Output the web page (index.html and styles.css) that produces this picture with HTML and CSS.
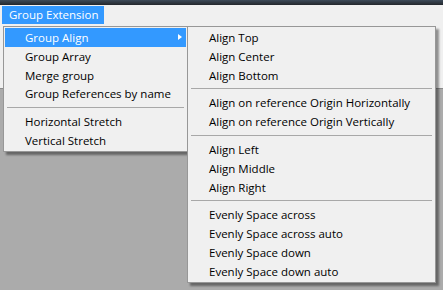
FILE: index.html
```html
<!DOCTYPE html>
<html lang="en">
<head>
  <meta charset="UTF-8">
  <title>Group Extension</title>
  <link rel="stylesheet" href="styles.css">
</head>
<body>
  <div class="titlebar"></div>
  <div class="menubar">
    <span class="menubar-item active">Group Extension</span>
  </div>
  <div class="workspace">
    <div class="toolstrip"></div>

    <div class="menu main-menu">
      <div class="item active">Group Align<span class="arrow"></span></div>
      <div class="item">Group Array</div>
      <div class="item">Merge group</div>
      <div class="item">Group References by name</div>
      <div class="sep"></div>
      <div class="item">Horizontal Stretch</div>
      <div class="item">Vertical Stretch</div>
    </div>

    <div class="menu sub-menu">
      <div class="item">Align Top</div>
      <div class="item">Align Center</div>
      <div class="item">Align Bottom</div>
      <div class="sep"></div>
      <div class="item">Align on reference Origin Horizontally</div>
      <div class="item">Align on reference Origin Vertically</div>
      <div class="sep"></div>
      <div class="item">Align Left</div>
      <div class="item">Align Middle</div>
      <div class="item">Align Right</div>
      <div class="sep"></div>
      <div class="item">Evenly Space across</div>
      <div class="item">Evenly Space across auto</div>
      <div class="item">Evenly Space down</div>
      <div class="item">Evenly Space down auto</div>
    </div>
  </div>
</body>
</html>
```

FILE: styles.css
```css
html, body {
  margin: 0;
  height: 100%;
}
body {
  font-family: "Open Sans", "Noto Sans", sans-serif;
  font-size: 11.5px;
  color: #000;
  background-color: #ababab;
  overflow: hidden;
}
.titlebar {
  height: 5px;
  background: linear-gradient(#3d4b59, #23272c);
}
.menubar {
  height: 20px;
  background-color: #f0f0f0;
  padding-left: 2px;
  display: flex;
  align-items: center;
}
.menubar-item {
  height: 18px;
  line-height: 18px;
  padding: 0 6px 0 7px;
}
.menubar-item.active {
  background-color: #3399ff;
  color: white;
}
.workspace {
  position: relative;
  height: 265px;
}
.toolstrip {
  height: 63px;
  background-color: #f0f0f0;
  border-bottom: 1px solid #8c8c8c;
}
.menu {
  position: absolute;
  top: 1px;
  background-color: #f0f0f0;
  border: 1px solid #979797;
  padding: 1px 1px;
  box-shadow: 3px 3px 2px rgba(0,0,0,0.4);
}
.main-menu {
  left: 3px;
  width: 181px;
}
.sub-menu {
  left: 187px;
  width: 245px;
}
.item {
  position: relative;
  height: 18.8px;
  line-height: 19.8px;
  padding-left: 20px;
  white-space: nowrap;
}
.item.active {
  background-color: #3399ff;
  color: white;
}
.arrow {
  position: absolute;
  right: 4px;
  top: 6px;
  width: 0;
  height: 0;
  border-top: 3.5px solid transparent;
  border-bottom: 3.5px solid transparent;
  border-left: 4px solid white;
}
.sep {
  height: 1px;
  margin: 4px 2px 4px 2px;
  background-color: #a8a8a8;
}
```
